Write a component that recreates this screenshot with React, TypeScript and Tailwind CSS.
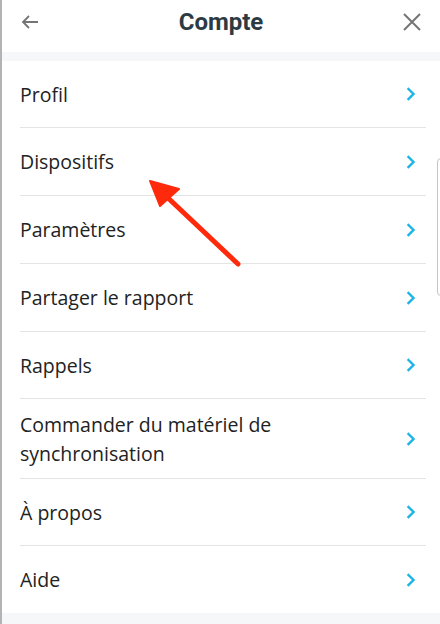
import React from 'react';

const items: { lines: string[]; h: string }[] = [
  { lines: ['Profil'], h: 'h-[66px]' },
  { lines: ['Dispositifs'], h: 'h-[67px]' },
  { lines: ['Paramètres'], h: 'h-[67px]' },
  { lines: ['Partager le rapport'], h: 'h-[67px]' },
  { lines: ['Rappels'], h: 'h-[66px]' },
  { lines: ['Commander du matériel de', 'synchronisation'], h: 'h-[79px]' },
  { lines: ['À propos'], h: 'h-[66px]' },
  { lines: ['Aide'], h: 'h-[67px]' },
];

const Chevron = () => (
  <svg width="10" height="14" viewBox="0 0 10 14" fill="none">
    <path d="M2.5 2 L7.5 7 L2.5 12" stroke="#1cb4e6" strokeWidth="2.4" strokeLinecap="square" />
  </svg>
);

export default function App() {
  return (
    <div
      className="relative w-[440px] h-[624px] overflow-hidden bg-white border-l-2 border-[#b3b3b3]"
      style={{ fontFamily: '"Open Sans", "Noto Sans", sans-serif' }}
    >
      <header className="h-[52px] flex items-center justify-between px-[18px] pb-[8px]">
        <svg width="20" height="16" viewBox="0 0 20 16" fill="none">
          <path d="M18 8 H3 M9 2 L3 8 L9 14" stroke="#757575" strokeWidth="1.8" />
        </svg>
        <h1 className="text-[24px] font-bold text-[#2c3a44]" style={{ fontFamily: 'Roboto, sans-serif' }}>
          Compte
        </h1>
        <svg width="20" height="20" viewBox="0 0 20 20" fill="none">
          <path d="M2 2 L18 18 M18 2 L2 18" stroke="#757575" strokeWidth="2" />
        </svg>
      </header>
      <div className="h-[9px] bg-[#f6f7f8]" />
      <ul>
        {items.map((it, i) => (
          <li key={i} className="ml-[18px] mr-[14px]">
            <div className={`flex items-center justify-between pr-[10px] ${it.h}`}>
              <div className="text-[19.5px] leading-[29px] text-[#222]">
                {it.lines.map((l) => (
                  <div key={l}>{l}</div>
                ))}
              </div>
              <Chevron />
            </div>
            {i < items.length - 1 && <div className="h-px bg-[#e4e4e4]" />}
          </li>
        ))}
      </ul>
      <div className="h-[12px] bg-[#f6f7f8]" />

      <div className="absolute right-[-6px] top-[158px] w-[9px] h-[138px] rounded-[4px] border border-[#c4c4c4] bg-white" />

      <svg className="absolute left-0 top-0" width="440" height="624" viewBox="0 0 440 624" fill="none">
        <path d="M236 264 L165 197" stroke="#ff2a0c" strokeWidth="5" strokeLinecap="round" />
        <path d="M148 181 L177 189 L158 206 Z" fill="#ff2a0c" stroke="#ff2a0c" strokeWidth="2" strokeLinejoin="round" />
      </svg>
    </div>
  );
}
